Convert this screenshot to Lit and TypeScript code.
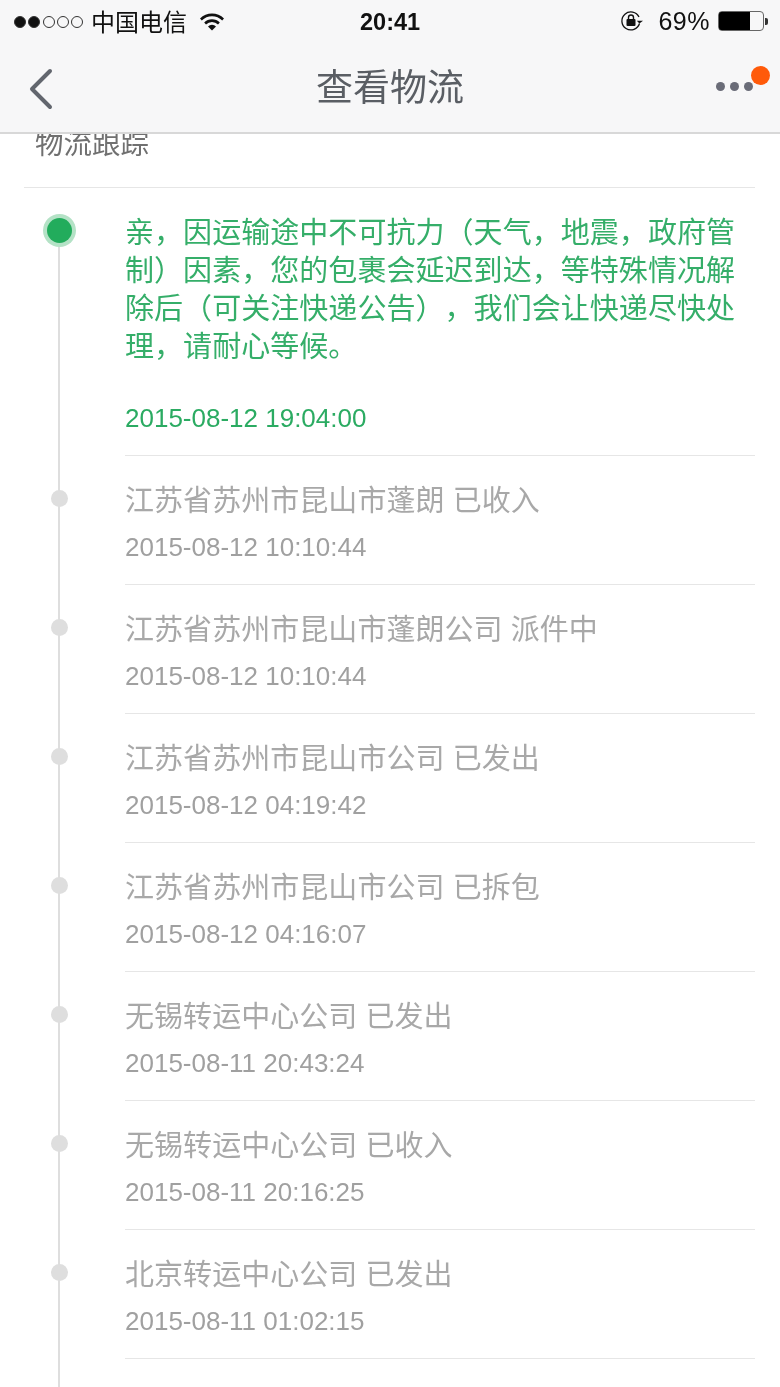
import {html, css, LitElement} from 'lit';
import {customElement} from 'lit/decorators.js';

const rows = [
  ['江苏省苏州市昆山市蓬朗 已收入', '2015-08-12 10:10:44'],
  ['江苏省苏州市昆山市蓬朗公司 派件中', '2015-08-12 10:10:44'],
  ['江苏省苏州市昆山市公司 已发出', '2015-08-12 04:19:42'],
  ['江苏省苏州市昆山市公司 已拆包', '2015-08-12 04:16:07'],
  ['无锡转运中心公司 已发出', '2015-08-11 20:43:24'],
  ['无锡转运中心公司 已收入', '2015-08-11 20:16:25'],
  ['北京转运中心公司 已发出', '2015-08-11 01:02:15'],
];

@customElement('app-root')
export class AppRoot extends LitElement {
  static styles = css`
    :host {
      display: block;
      width: 780px;
      height: 1387px;
      overflow: hidden;
      background: #fff;
      font-family: "Liberation Sans", "Noto Sans CJK SC", sans-serif;
      text-spacing-trim: space-all;
      filter: blur(0.3px);
    }

    .top {
      position: relative;
      z-index: 2;
      height: 132px;
      background: #f7f7f8;
      border-bottom: 2px solid #d8d8d8;
    }

    .status {
      height: 44px;
      display: flex;
      align-items: center;
      position: relative;
      color: #111;
      padding: 0 14px;
    }
    .signal {
      display: flex;
      gap: 2.25px;
      margin: -1px 8px 0 0;
    }
    .signal i {
      width: 12px;
      height: 12px;
      box-sizing: border-box;
      border-radius: 50%;
      border: 1px solid #333;
    }
    .signal i.on {
      background: #111;
    }
    .carrier {
      font-size: 24px;
      margin: -3px 12px 0 0;
    }
    .wifi {
      margin-top: -2px;
    }
    .clock {
      position: absolute;
      left: 360px;
      top: 8px;
      font-size: 23.5px;
      line-height: 28px;
      font-weight: 700;
    }
    .status-right {
      margin: -2px -2px 0 auto;
      display: flex;
      align-items: center;
    }
    .pct {
      font-size: 25px;
      margin: 0 8px 0 14px;
      letter-spacing: 0.5px;
    }
    .battery {
      width: 46px;
      height: 20px;
      box-sizing: border-box;
      border: 1px solid #666;
      border-radius: 4px;
      display: flex;
    }
    .battery b {
      width: 31px;
      background: #000;
      border-radius: 2px 0 0 2px;
    }
    .nub {
      width: 3px;
      height: 7px;
      background: #333;
      border-radius: 0 2px 2px 0;
      margin-left: 1px;
    }

    .nav {
      height: 88px;
      display: flex;
      align-items: center;
      justify-content: center;
      position: relative;
    }
    .back {
      position: absolute;
      left: 28px;
      top: 24px;
    }
    .title {
      font-size: 37px;
      color: #5a5e64;
      margin-top: -6px;
    }
    .more {
      position: absolute;
      left: 716px;
      top: 38px;
      display: flex;
      gap: 5px;
    }
    .more i {
      width: 9px;
      height: 9px;
      border-radius: 50%;
      background: #6a6c78;
    }
    .badge {
      position: absolute;
      left: 751px;
      top: 22px;
      width: 19px;
      height: 19px;
      border-radius: 50%;
      background: #ff5a0a;
    }

    .section {
      margin: -10px 25px 0 24px;
      height: 64px;
      box-sizing: border-box;
      padding: 0 0 0 11px;
      border-bottom: 1px solid #e6e6e6;
      font-size: 28.5px;
      line-height: 40px;
      color: #707070;
    }

    .row {
      display: grid;
      grid-template-columns: 125px 1fr;
    }
    .rail {
      position: relative;
    }
    .rail::before {
      content: "";
      position: absolute;
      left: 58px;
      top: 0;
      bottom: 0;
      width: 2px;
      background: #dedede;
    }
    .dot {
      position: absolute;
      left: 51px;
      top: 34px;
      width: 17px;
      height: 17px;
      border-radius: 50%;
      background: #dedede;
    }
    .first .rail::before {
      top: 40px;
    }
    .first .dot {
      left: 47px;
      top: 30px;
      width: 25px;
      height: 25px;
      background: #22ac5c;
      box-shadow: 0 0 0 4px #b4e2c6;
    }

    .body {
      margin-right: 25px;
      height: 129px;
      box-sizing: border-box;
      border-bottom: 1px solid #e6e6e6;
      padding-top: 26px;
      color: #a8a8a8;
    }
    .text {
      font-size: 29px;
      letter-spacing: 0.05px;
      line-height: 38px;
    }
    .date {
      font-size: 26px;
      line-height: 30px;
      margin-top: 12px;
      color: #a0a0a0;
    }
    .first .body {
      height: 268px;
      color: #35ae69;
    }
    .first .date {
      margin-top: 37px;
      color: #2bab62;
    }
  `;

  render() {
    return html`
      <div class="top">
        <div class="status">
          <div class="signal">
            <i class="on"></i><i class="on"></i><i></i><i></i><i></i>
          </div>
          <span class="carrier">中国电信</span>
          <svg class="wifi" width="26" height="20" viewBox="0 0 26 20">
            <path d="M1 7.5a17 17 0 0 1 24 0l-1.8 1.9a14.4 14.4 0 0 0-20.4 0z" fill="#111"/>
            <path d="M5.2 11.6a11 11 0 0 1 15.6 0L19 13.4a8.4 8.4 0 0 0-12 0z" fill="#111"/>
            <path d="M9 15.4a5.6 5.6 0 0 1 8 0l-4 4z" fill="#111"/>
          </svg>
          <span class="clock">20:41</span>
          <div class="status-right">
            <svg width="24" height="22" viewBox="0 0 24 22">
              <path d="M19.5 13.5A9 9 0 1 1 19 7" fill="none" stroke="#111" stroke-width="1.3"/>
              <path d="M23 10.8l-3.6 2.6-2.6-2.6z" fill="#111"/>
              <rect x="6.5" y="9" width="9" height="7" rx="1" fill="#111"/>
              <path d="M8.5 9V7.5a2.5 2.5 0 0 1 5 0V9" fill="none" stroke="#111" stroke-width="1.4"/>
            </svg>
            <span class="pct">69%</span>
            <div class="battery"><b></b></div>
            <div class="nub"></div>
          </div>
        </div>
        <div class="nav">
          <svg class="back" width="26" height="42" viewBox="0 0 26 42">
            <path d="M22 3L4 21l18 18" fill="none" stroke="#62666e" stroke-width="4" stroke-linecap="round" stroke-linejoin="round"/>
          </svg>
          <span class="title">查看物流</span>
          <div class="more"><i></i><i></i><i></i></div>
          <div class="badge"></div>
        </div>
      </div>
      <div class="section">物流跟踪</div>
      <div class="row first">
        <div class="rail"><div class="dot"></div></div>
        <div class="body">
          <div class="text">亲，因运输途中不可抗力（天气，地震，政府管制）因素，您的包裹会延迟到达，等特殊情况解除后（可关注快递公告），我们会让快递尽快处理，请耐心等候。</div>
          <div class="date">2015-08-12 19:04:00</div>
        </div>
      </div>
      ${rows.map(
        ([text, date]) => html`
          <div class="row">
            <div class="rail"><div class="dot"></div></div>
            <div class="body">
              <div class="text">${text}</div>
              <div class="date">${date}</div>
            </div>
          </div>
        `
      )}
      <div class="row"><div class="rail" style="height: 40px"></div></div>
    `;
  }
}
